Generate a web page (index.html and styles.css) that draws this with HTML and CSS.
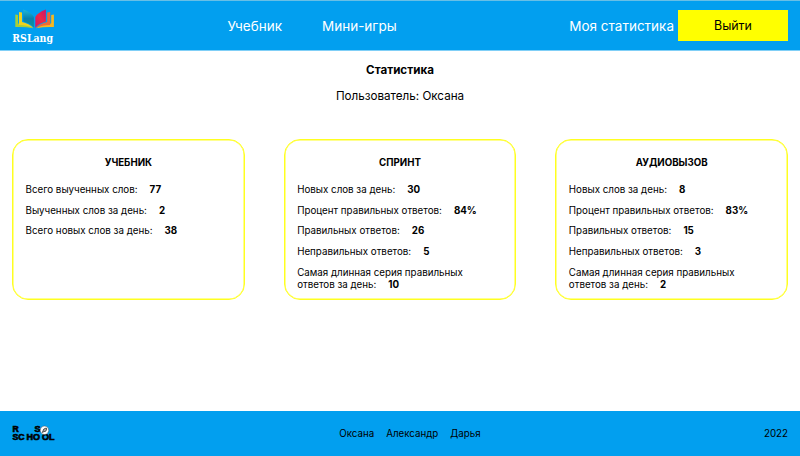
FILE: index.html
```html
<!DOCTYPE html>
<html lang="ru">
<head>
<meta charset="utf-8">
<title>RSLang</title>
<link rel="stylesheet" href="styles.css">
</head>
<body>
<header class="header">
  <a class="logo">
    <svg class="logo-book" viewBox="0 0 40 20" width="40" height="20">
      <defs>
        <linearGradient id="left" x1="0" y1="0" x2="0" y2="1"><stop offset="0" stop-color="#1fb9d8"/><stop offset=".5" stop-color="#0a7fae"/><stop offset="1" stop-color="#08989a"/></linearGradient>
        <linearGradient id="right" x1="1" y1="0" x2="0" y2="1"><stop offset="0" stop-color="#c9146f"/><stop offset=".5" stop-color="#ee2846"/><stop offset="1" stop-color="#d5126a"/></linearGradient>
      </defs>
      <path fill="#a5cf3a" d="M.3 5.500 3 6V14.500Q12 15 18 19.200Q10 17.500.3 18z"/>
      <path fill="#f0d31c" d="M4 3 7 3.500V13Q14 14.500 18.500 19Q12 16 4 16z"/>
      <path fill="url(#left)" d="M8.300.5Q16.500 3.500 18.900 8V18.800Q15.500 14.500 8.300 12.500z"/>
      <path fill="#f7b81f" d="M38.900 5.500 36.200 6V14.500Q27.200 15 21.200 19.200Q29.200 17.500 38.900 18z"/>
      <path fill="#ef6a35" d="M35.200 3 32.200 3.500V13Q25.200 14.500 20.700 19Q27.200 16 35.200 16z"/>
      <path fill="url(#right)" d="M30.900.5Q22.700 3.500 20.300 8V18.800Q23.700 14.500 30.900 12.500z"/>
    </svg>
    <svg class="logo-text" viewBox="0 0 43 14" width="43" height="14">
      <text x=".3" y="11" textLength="40.700" lengthAdjust="spacingAndGlyphs">RSLang</text>
    </svg>
  </a>
  <nav class="nav"><a>Учебник</a><a>Мини-игры</a></nav>
  <div class="account"><a>Моя статистика</a><button class="logout">Выйти</button></div>
</header>
<main class="main">
  <h1 class="title">Статистика</h1>
  <p class="user">Пользователь: Оксана</p>
  <div class="cards">
    <section class="card">
      <h2>УЧЕБНИК</h2>
      <p>Всего выученных слов:<b>77</b></p>
      <p>Выученных слов за день:<b>2</b></p>
      <p>Всего новых слов за день:<b>38</b></p>
    </section>
    <section class="card">
      <h2>СПРИНТ</h2>
      <p>Новых слов за день:<b>30</b></p>
      <p>Процент правильных ответов:<b>84%</b></p>
      <p>Правильных ответов:<b>26</b></p>
      <p>Неправильных ответов:<b>5</b></p>
      <p>Самая длинная серия правильных<br>ответов за день:<b>10</b></p>
    </section>
    <section class="card">
      <h2>АУДИОВЫЗОВ</h2>
      <p>Новых слов за день:<b>8</b></p>
      <p>Процент правильных ответов:<b>83%</b></p>
      <p>Правильных ответов:<b>15</b></p>
      <p>Неправильных ответов:<b>3</b></p>
      <p>Самая длинная серия правильных<br>ответов за день:<b>2</b></p>
    </section>
  </div>
</main>
<footer class="footer">
  <svg class="school" viewBox="0 0 44 18" width="44" height="18">
    <text x=".4" y="7.300" textLength="6.300" lengthAdjust="spacingAndGlyphs">R</text>
    <text x="22.500" y="7.300" textLength="6" lengthAdjust="spacingAndGlyphs">S</text>
    <text x=".4" y="15" textLength="12" lengthAdjust="spacingAndGlyphs">SC</text>
    <text x="14.500" y="15" textLength="13.500" lengthAdjust="spacingAndGlyphs">HO</text>
    <text x="29.900" y="15" textLength="12.500" lengthAdjust="spacingAndGlyphs">OL</text>
    <circle cx="32.500" cy="5.300" r="4.200" fill="#fff" stroke="#333" stroke-width=".4"/>
    <path d="m30.300 7.500 1.500-3.500 2.500-1 .5 1-1 2.200-2 .5z" fill="#aaa" stroke="#222" stroke-width=".7"/>
  </svg>
  <div class="authors"><a>Оксана</a><a>Александр</a><a>Дарья</a></div>
  <span class="year">2022</span>
</footer>
</body>
</html>
```
FILE: styles.css
```css
* { box-sizing: border-box; }
body {
  margin: 0;
  height: 456px;
  display: flex;
  flex-direction: column;
  font-family: Inter, sans-serif;
  color: #000;
  background: #fff;
  overflow: hidden;
}
h1, h2, p { margin: 0; }
.header {
  height: 51px;
  flex: none;
  display: grid;
  grid-template-columns: 215.500px 1fr auto;
  align-items: center;
  padding: 0 12px;
  background: #029fef;
  border-top: 1px solid #68bfe6;
  border-bottom: 1px solid #80cff7;
  color: #fff;
  font-size: 13.500px;
}
.logo { display: flex; flex-direction: column; align-items: flex-start; }
.logo-book { margin-left: 3px; margin-top: 2px; }
.logo-text {
  margin-top: 2px;
  overflow: visible;
  fill: #fff;
  font: bold 10.500px "DejaVu Serif", serif;
}
.nav { display: flex; gap: 40px; }
.account { display: flex; align-items: center; gap: 4px; }
.logout {
  width: 110px;
  height: 31px;
  border: 0;
  padding: 0;
  background: #ff0;
  color: #000;
  font: 12.400px Inter, sans-serif;
}
.main { flex: 1; padding: 12px 12px 0; }
.title { font-size: 11.600px; line-height: 15px; text-align: center; }
.user { margin-top: 11px; font-size: 11.650px; line-height: 15px; text-align: center; }
.cards {
  display: grid;
  grid-template-columns: repeat(3, 1fr);
  gap: 39px;
  margin-top: 35px;
}
.card {
  height: 161px;
  padding: 16.800px 12.500px 0;
  border: 1px solid #ffff20;
  box-shadow: inset 0 0 0 .5px #ffff20;
  border-radius: 16px;
  font-size: 9.770px;
  line-height: 12px;
}
.card h2 { font-size: 9.700px; line-height: 12px; text-align: center; margin-bottom: 15px; }
.card p { margin-bottom: 8.750px; }
.card b { margin-left: 12px; }
.footer {
  height: 45px;
  flex: none;
  display: flex;
  justify-content: space-between;
  align-items: center;
  padding: 0 12px;
  background: #029fef;
  font-size: 9.750px;
}
.school { font: bold 8.600px "Liberation Sans", sans-serif; }
.school text { stroke: #000; stroke-width: .6px; }
.authors { display: flex; gap: 12px; }
```
